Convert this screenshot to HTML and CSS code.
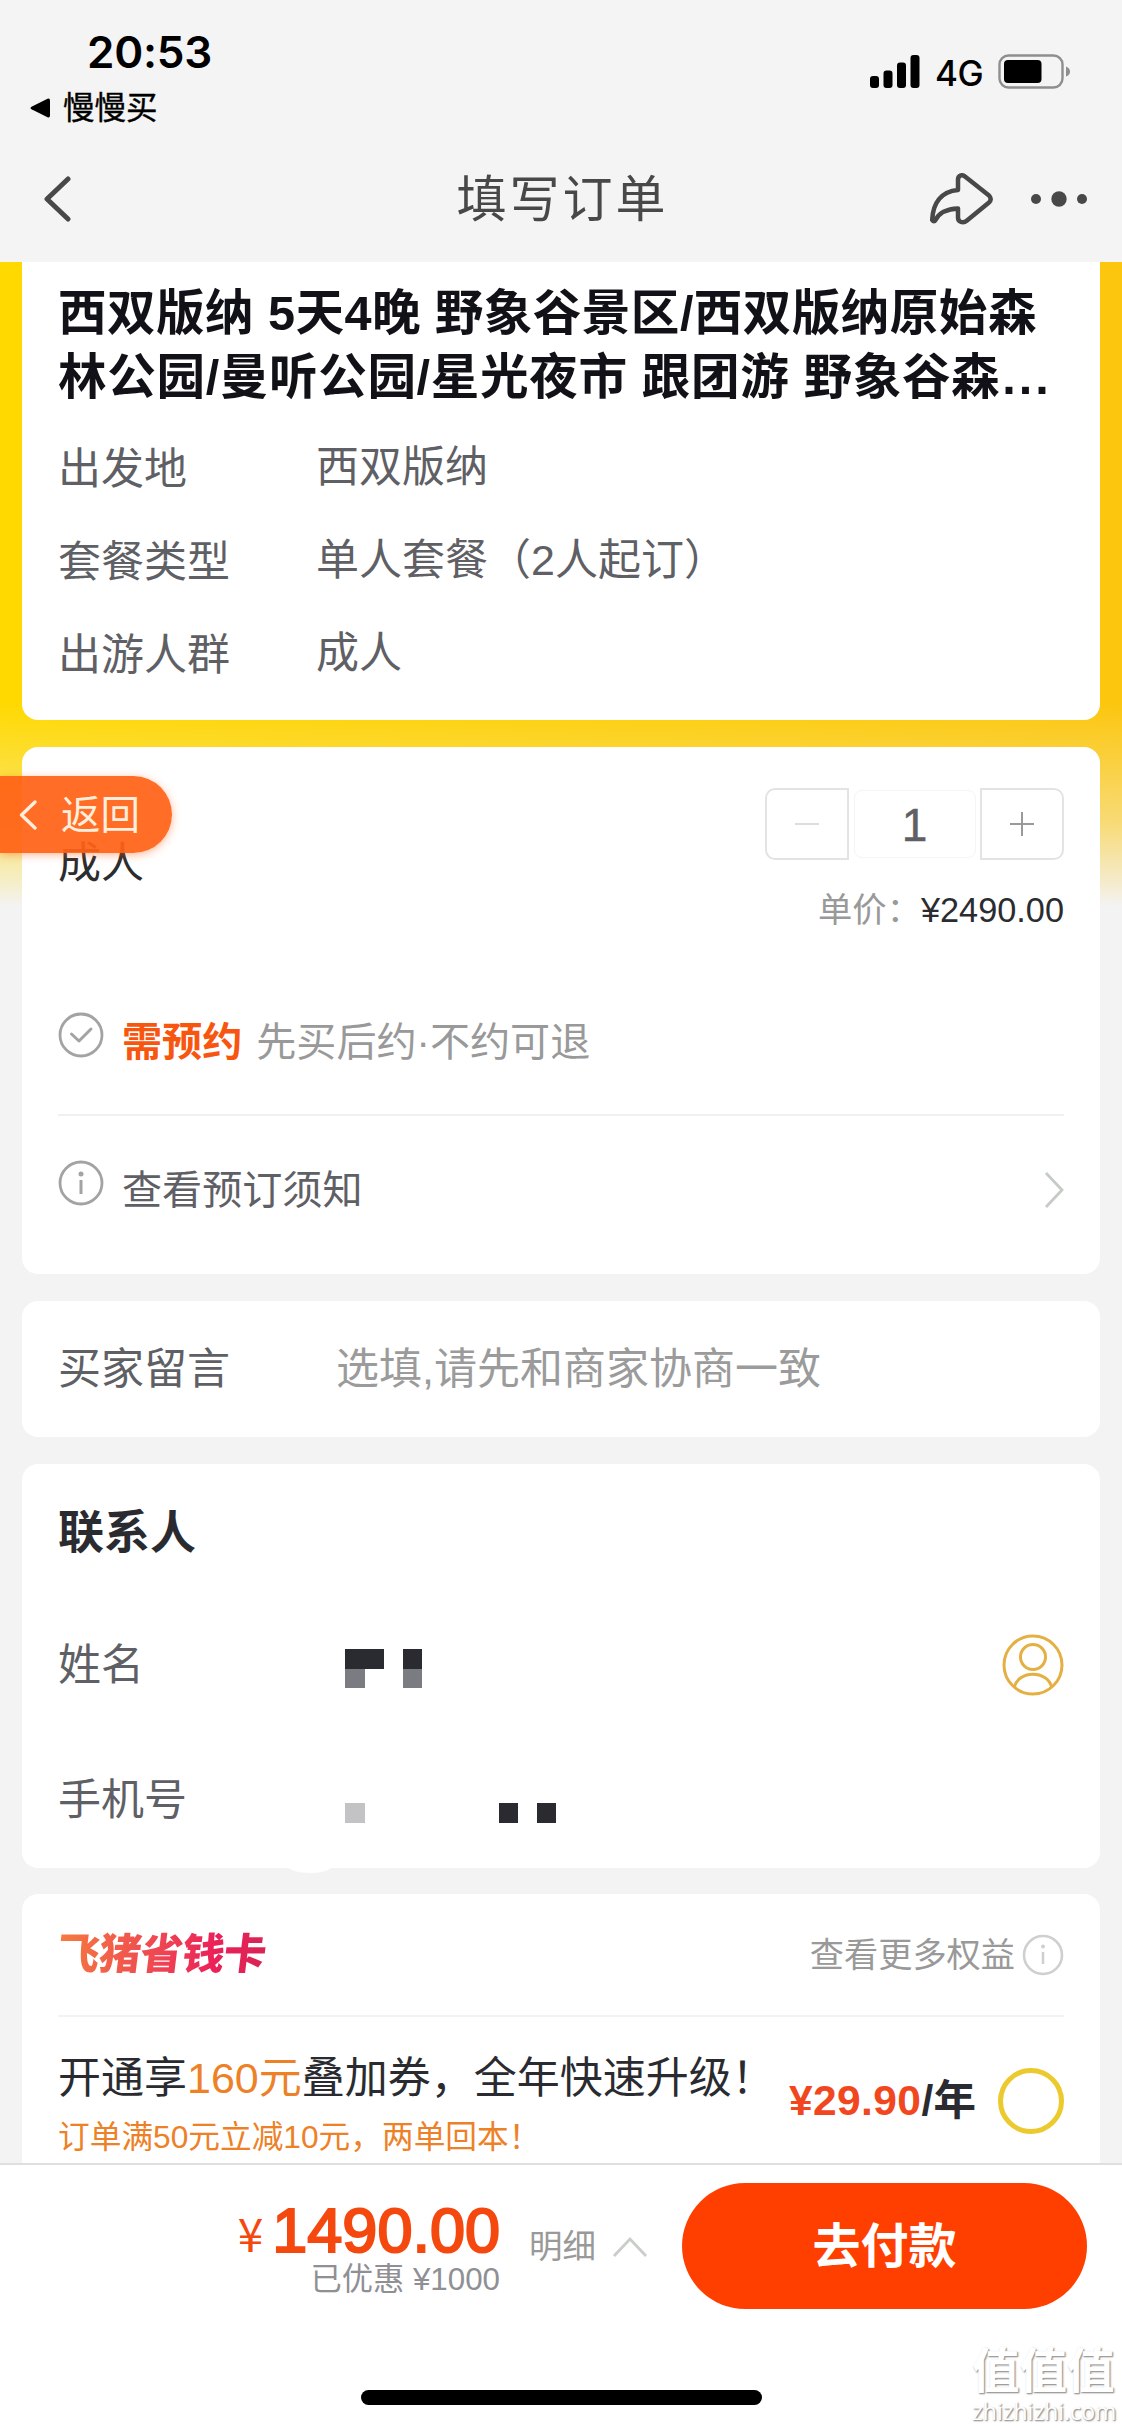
FILE: index.html
```html
<!DOCTYPE html>
<html lang="zh-CN">
<head>
<meta charset="utf-8">
<title>填写订单</title>
<link rel="stylesheet" href="styles.css">
</head>
<body>
<div class="screen">
  <header class="header">
    <div class="status">
      <div class="status-left">
        <div class="clock">20:53</div>
        <div class="return-app">
          <svg width="20" height="20" viewBox="0 0 20 20"><path d="M1.5 8.7 17.500 .8Q20 0 20 2.500V17.500Q20 20 17.500 19.200L1.500 11.300Q-.5 10 1.500 8.700Z" fill="#000"/></svg>
          <span>慢慢买</span>
        </div>
      </div>
      <div class="status-right">
        <svg class="signal" width="50" height="34" viewBox="0 0 50 34"><rect x="0" y="21" width="9" height="12" rx="3"/><rect x="13.500" y="15.500" width="9" height="17.500" rx="3"/><rect x="27" y="7.500" width="9" height="25.500" rx="3"/><rect x="40.500" y="0" width="9" height="33" rx="3"/></svg>
        <span class="network">4G</span>
        <svg class="battery" width="74" height="36" viewBox="0 0 74 36"><rect x="1.500" y="1.500" width="63" height="32" rx="9" fill="none" stroke="#8e8e8e" stroke-width="2.400"/><rect x="6" y="6" width="37.500" height="23" rx="4"/><path d="M68 12.500Q72 14 72 17.500T68 22.500Z" fill="#8e8e8e"/></svg>
      </div>
    </div>
    <div class="nav">
      <svg class="nav-back" width="30" height="46" viewBox="0 0 30 46"><path d="M26 3 5 23 26 43" fill="none" stroke="#484848" stroke-width="5" stroke-linecap="round" stroke-linejoin="round"/></svg>
      <h1>填写订单</h1>
      <div class="nav-actions">
        <svg width="64" height="52" viewBox="0 0 64 52"><path d="M28 17V6.500C28 2.500 32 1 35 3.500L59 22.500Q62.500 26 59 29.500L37 47.500C33 51 28 49 28 44.500V35.500C16 36 9 40 5.500 47Q4 49.500 2.200 47C3 30 11 18.500 28 17Z" fill="none" stroke="#484848" stroke-width="4.500" stroke-linejoin="round"/></svg>
        <svg width="58" height="16" viewBox="0 0 58 16"><g fill="#484848"><circle cx="6" cy="8" r="5"/><circle cx="29" cy="8" r="7.700"/><circle cx="52" cy="8" r="5"/></g></svg>
      </div>
    </div>
  </header>

  <main class="content">
    <section class="card product">
      <h2><span class="line one">西双版纳 5天4晚 野象谷景区/西双版纳原始森</span><span class="line two">林公园/曼听公园/星光夜市 跟团游 野象谷森<span class="dots">...</span></span></h2>
      <dl>
        <div class="field"><dt>出发地</dt><dd>西双版纳</dd></div>
        <div class="field"><dt>套餐类型</dt><dd>单人套餐（2人起订）</dd></div>
        <div class="field"><dt>出游人群</dt><dd>成人</dd></div>
      </dl>
    </section>

    <section class="card booking">
      <div class="guests">
        <span class="guest-type">成人</span>
        <div class="quantity">
          <div class="stepper">
            <span class="step minus"><svg width="24" height="24" viewBox="0 0 24 24"><path d="M0 12H24" stroke="#ddd" stroke-width="2"/></svg></span>
            <span class="count">1</span>
            <span class="step plus"><svg width="24" height="24" viewBox="0 0 24 24"><path d="M0 12H24M12 0V24" stroke="#999" stroke-width="2"/></svg></span>
          </div>
          <div class="unit-price"><span>单价：</span><b>¥2490.00</b></div>
        </div>
      </div>
      <div class="notice reserve">
        <svg width="46" height="46" viewBox="0 0 46 46"><g fill="none" stroke="#a3a3a3"><circle cx="23" cy="23" r="21" stroke-width="2.800"/><path d="M13.500 22 21 29 33 17" stroke-width="3" stroke-linecap="round" stroke-linejoin="round"/></g></svg>
        <strong>需预约</strong><span>先买后约·不约可退</span>
      </div>
      <div class="notice terms">
        <svg width="46" height="46" viewBox="0 0 46 46"><circle cx="23" cy="23" r="21" fill="none" stroke="#a3a3a3" stroke-width="2.800"/><circle cx="23" cy="14" r="2.500" fill="#a3a3a3"/><path d="M23 20V34" stroke="#a3a3a3" stroke-width="3"/></svg>
        <span>查看预订须知</span>
        <svg class="go" width="20" height="38" viewBox="0 0 20 38"><path d="M2 2 18 19 2 36" fill="none" stroke="#c5cbc5" stroke-width="2.800"/></svg>
      </div>
    </section>

    <section class="card message">
      <span class="label">买家留言</span><span class="placeholder">选填,请先和商家协商一致</span>
    </section>

    <section class="card contact">
      <h3>联系人</h3>
      <div class="contact-row">
        <span class="label">姓名</span>
        <svg class="masked" width="230" height="40" viewBox="0 0 230 40"><g fill="#2a2b31"><rect width="39" height="20"/><rect x="58" width="19" height="20"/></g><g fill="#7b7c81"><rect y="20" width="20" height="19"/><rect x="58" y="20" width="19" height="19"/></g></svg>
        <svg class="person" width="62" height="62" viewBox="0 0 62 62"><g fill="none" stroke="#e5b043" stroke-width="3"><circle cx="31" cy="31" r="29"/><circle cx="31" cy="23" r="12.500"/><path d="M12.500 53C16 36 46 36 49.500 53"/></g></svg>
      </div>
      <div class="contact-row">
        <span class="label">手机号</span>
        <svg class="masked phone" width="230" height="20" viewBox="0 0 230 20"><rect width="20" height="20" fill="#c3c3c5"/><g fill="#2a2b31"><rect x="154" width="19" height="20"/><rect x="192" width="19" height="20"/></g></svg>
      </div>
      <i class="smudge"></i>
    </section>

    <section class="card saver">
      <div class="saver-head">
        <span class="saver-logo">飞猪省钱卡</span>
        <span class="more">查看更多权益</span>
        <svg width="42" height="42" viewBox="0 0 42 42"><circle cx="21" cy="21" r="19" fill="none" stroke="#cfcfcf" stroke-width="2.600"/><circle cx="21" cy="12.500" r="2" fill="#cfcfcf"/><path d="M21 18V30" stroke="#cfcfcf" stroke-width="2.500"/></svg>
      </div>
      <div class="offer">
        <div class="offer-text">
          <p class="offer-title">开通享<em>160元</em>叠加券，全年快速升级！</p>
          <p class="offer-sub">订单满50元立减10元，两单回本！</p>
        </div>
        <div class="offer-price"><b>¥29.90</b>/年</div>
        <span class="radio"></span>
      </div>
    </section>
  </main>

  <footer class="footer">
    <div class="pay">
      <div class="totals">
        <div class="total"><span class="yen">¥</span><span class="amount">1490.00</span></div>
        <div class="saved">已优惠 ¥1000</div>
      </div>
      <div class="detail"><span>明细</span><svg width="36" height="22" viewBox="0 0 36 22"><path d="M2 20 18 3 34 20" fill="none" stroke="#c8cec8" stroke-width="2.800"/></svg></div>
      <div class="submit">去付款</div>
    </div>
    <div class="home-bar"></div>
  </footer>

  <div class="float-back"><svg width="18" height="30" viewBox="0 0 18 30"><path d="M16 2 2.500 15 16 28" fill="none" stroke="#ffeedc" stroke-width="3.300" stroke-linecap="round" stroke-linejoin="round"/></svg><span>返回</span></div>
  <div class="watermark"><span class="wm-name">值值值</span><span class="wm-site">zhizhizhi.com</span></div>
</div>
</body>
</html>
```
FILE: styles.css
```css
* { box-sizing: border-box; margin: 0; padding: 0; }
body { background: #f3f3f4; }
svg { display: block; flex: none; }
em, i { font-style: normal; }

.screen {
  position: relative;
  width: 1122px;
  height: 2428px;
  overflow: hidden;
  display: flex;
  flex-direction: column;
  font-family: "Liberation Sans", "Noto Sans CJK SC", sans-serif;
  font-size: 43px;
  line-height: 60px;
  white-space: nowrap;
  color: #5f6065;
}

/* status bar and navigation */
.header { height: 262px; background: #f4f4f4; flex: none; }
.status { height: 136px; display: flex; justify-content: space-between; color: #000; }
.status-left { padding: 26px 0 0 30px; }
.clock { padding-left: 57px; height: 52px; font: 600 44px/52px Inter, sans-serif; letter-spacing: -.2px; }
.return-app { display: flex; align-items: center; gap: 13px; height: 60px; font-size: 31.500px; font-weight: 400; -webkit-text-stroke: .4px #000; }
.status-right { display: flex; padding: 54px 50px 0 0; align-items: flex-start; }
.network { font: 500 35px/36px Inter, sans-serif; margin: 1px 0 0 15px; width: 63px; letter-spacing: -.5px; }
.signal { margin-top: 1px; }
.nav { height: 126px; display: grid; grid-template-columns: 1fr auto 1fr; align-items: center; padding: 0 34px 0 42px; color: #484848; }
.nav h1 { font-size: 50px; font-weight: 400; letter-spacing: 3px; line-height: 70px; padding-top: 1px; margin-right: 5px; }
.nav-actions { display: flex; align-items: center; justify-content: flex-end; gap: 36px; }

/* scrolling content */
.content {
  flex: 1;
  min-height: 0;
  overflow: hidden;
  padding: 0 22px;
  background:
    linear-gradient(to bottom, rgba(243,243,244,0) 0, rgba(243,243,244,0) 440px, rgba(243,243,244,.18) 490px, rgba(243,243,244,.45) 560px, rgba(243,243,244,.82) 620px, #f3f3f4 645px),
    linear-gradient(to right, #ffd900, #fcc60e);
}
.card { background: #fff; border-radius: 16px; padding: 0 36px; margin-bottom: 27px; }

.product { height: 458px; border-radius: 0 0 16px 16px; padding-top: 19px; }
.product h2 { font-size: 48.600px; line-height: 64px; color: #111217; margin-bottom: 12px; font-weight: 600; }
.line { display: block; }
.one { letter-spacing: .42px; }
.two { letter-spacing: .62px; }
.dots { letter-spacing: 3px; margin-left: 2px; }
.field { display: flex; height: 93px; align-items: center; }
.field dt { width: 258px; padding-top: 3px; }
.field dd { padding-bottom: 2px; }

.booking { height: 527px; }
.guests { height: 214px; display: flex; justify-content: space-between; }
.guest-type { margin-top: 86px; color: #2b2c30; }
.quantity { padding-top: 41px; }
.stepper { display: flex; width: 299px; height: 72px; justify-content: space-between; align-items: center; }
.step { width: 84px; height: 72px; border: 2px solid #e3e3e3; display: flex; align-items: center; justify-content: center; }
.minus { border-radius: 10px 0 0 10px; }
.plus { border-radius: 0 10px 10px 0; }
.count { width: 122px; height: 68px; border: 1px solid #f5f5f5; border-radius: 8px; line-height: 68px; font-size: 46px; text-align: center; -webkit-text-stroke: .5px #5f6065; }
.unit-price { display: flex; justify-content: flex-end; line-height: 50px; margin-top: 25px; font-size: 34.300px; color: #999; }
.unit-price b { font-weight: 400; color: #2b2c30; }
.notice { display: flex; align-items: flex-start; font-size: 40.100px; }
.reserve { height: 155px; padding-top: 51px; border-bottom: 2px solid #f0f0f0; color: #999; }
.reserve > svg { margin-top: 0; }
.reserve strong { margin: 0 14px 0 18px; color: #f8560f; }
.terms { padding-top: 44px; color: #5f6065; }
.terms > svg:first-child { margin: 0 18px 0 0; }
.terms .go { margin: 11px 0 0 auto; }

.message { height: 136px; display: flex; align-items: center; }
.message .label { width: 278px; }
.placeholder { color: #9b9b9b; }

.contact { height: 404px; padding-top: 38px; position: relative; margin-bottom: 26px; }
.contact h3 { font-size: 46px; color: #2a2b31; }
.contact-row { display: flex; height: 135px; align-items: center; }
.contact h3 + .contact-row { margin-top: 35px; }
.contact-row .label { width: 287px; }
.masked { margin-top: 8px; }
.phone { margin-top: 26px; }
.person { margin-left: auto; }
.smudge { position: absolute; left: 266px; bottom: -5px; width: 44px; height: 14px; border-radius: 50%; background: #fff; }

.saver { height: 300px; margin-bottom: 0; }
.saver-head { display: flex; align-items: center; height: 123px; border-bottom: 2px solid #f3f3f3; }
.saver-logo { font-size: 42.500px; font-weight: 900; letter-spacing: -.8px; margin-left: -1px; transform: skewX(-7deg); background: linear-gradient(to right, #f57b3f, #ef4b52 45%, #ec2158 75%, #d92455); -webkit-background-clip: text; background-clip: text; color: transparent; }
.more { margin-left: auto; margin-right: 7px; font-size: 34.200px; color: #999; }
.offer { display: flex; padding-top: 31px; }
.offer-text { width: 731px; }
.offer-title { color: #2a2b31; }
.offer-title em, .offer-sub { color: #ed8127; }
.offer-sub { font-size: 31.700px; line-height: 58px; }
.offer-price { font-size: 42.500px; margin-top: 23px; color: #2a2b31; font-weight: 600; word-spacing: 2px; letter-spacing: .4px; }
.offer-price b { color: #f2461f; }
.radio { width: 66px; height: 66px; border: 5px solid #ecc92c; border-radius: 50%; margin: 20px 0 0 auto; }

/* payment bar */
.footer { height: 265px; flex: none; background: #fff; border-top: 2px solid #dfdfdf; }
.pay { display: flex; height: 145px; padding: 18px 35px 0 0; }
.totals { width: 500px; text-align: right; color: #8f8f94; }
.total { display: flex; justify-content: flex-end; align-items: baseline; height: 68px; color: #f5480f; padding-top: 12px; }
.yen { font-family: "Noto Sans CJK SC", sans-serif; font-size: 46px; margin-right: 9px; line-height: 1; }
.amount { font-size: 63px; line-height: 70px; -webkit-text-stroke: 2.200px #f5480f; }
.saved { font-size: 31.300px; line-height: 57px; }
.detail { display: flex; align-items: center; gap: 16px; width: 182px; padding-left: 29px; height: 128px; font-size: 33.500px; color: #999; }
.submit { width: 405px; height: 126px; border-radius: 63px; background: #ff3f00; color: #fff; font-size: 48px; font-weight: 600; line-height: 128px; text-align: center; }
.home-bar { width: 401px; height: 15px; border-radius: 8px; background: #000; margin: 80px auto 0; }

/* overlays */
.float-back { position: absolute; left: 0; top: 776px; width: 172px; height: 77px; display: flex; align-items: center; gap: 24px; padding-left: 19px; border-radius: 0 39px 39px 0; background: rgba(255,98,22,.93); box-shadow: 0 2px 8px rgba(255,98,22,.45); color: #ffeedc; font-size: 39.500px; }
.watermark { position: absolute; right: 5px; top: 2344px; width: 145px; color: #fff; text-shadow: 1px 1px 2px #999, 1px 1px 1px #aaa; }
.wm-name { display: block; font-size: 47.500px; line-height: 56px; font-weight: 600; }
.wm-site { display: block; font-size: 23px; line-height: 22px; font-family: "Open Sans", sans-serif; }
```
